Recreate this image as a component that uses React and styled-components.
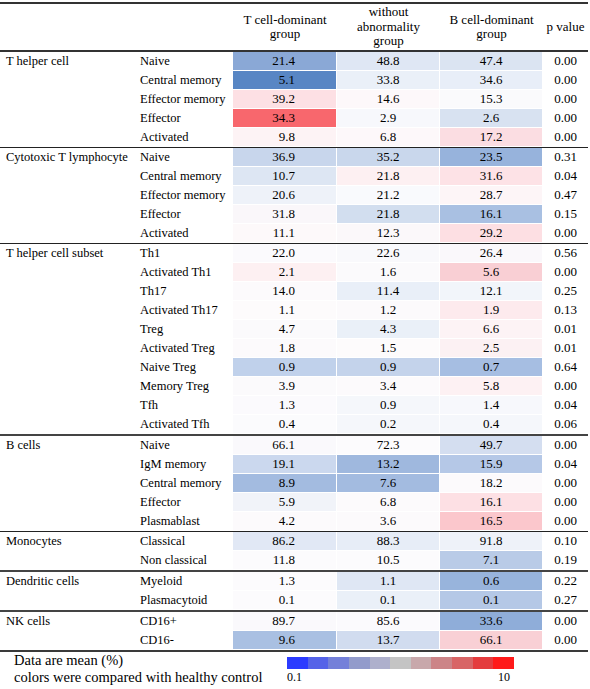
import React from 'react';
import styled, { createGlobalStyle } from 'styled-components';

const GlobalStyle = createGlobalStyle`
  body {
    margin: 0;
    background: #fff;
    color: #000;
  }
`;

const COLS = '138px 95px 104px 103px 103px 45px';

const Page = styled.div`
  width: 590px;
  padding-top: 2px;
  font-family: 'Liberation Serif', 'Times New Roman', serif;
  font-size: 12.5px;
`;

const Table = styled.div`
  width: 588px;
  border-top: 2px solid #333;
  border-bottom: 2px solid #3a3a3a;
`;

const HeaderRow = styled.div`
  display: grid;
  grid-template-columns: ${COLS};
  height: 46px;
  border-bottom: 2px solid #333;
  font-size: 13px;
`;

const HeadCell = styled.div`
  display: flex;
  align-items: center;
  justify-content: center;
  text-align: center;
  line-height: 14.5px;
`;

const Section = styled.div`
  display: grid;
  grid-template-columns: ${COLS};
  grid-auto-rows: 19px;
  border-top: ${(p) => (p.$first ? 'none' : p.$thin ? '1px solid #222' : '2px solid #444')};
`;

const GroupLabel = styled.div`
  grid-column: 1;
  grid-row: 1 / span ${(p) => p.$span};
  padding-left: 6px;
  line-height: 19px;
`;

const SubLabel = styled.div`
  grid-column: 2;
  padding-left: 2px;
  line-height: 19px;
  white-space: nowrap;
`;

const Value = styled.div`
  background: ${(p) => p.$bg || '#fff'};
  box-shadow: inset -1px -1px 0 #fff;
  line-height: 18px;
  font-size: 13px;
  text-align: ${(p) => (p.$right ? 'right' : 'center')};
  padding-right: ${(p) => (p.$right ? '42px' : '1px')};
`;

const PCell = styled.div`
  text-align: center;
  line-height: 18px;
  font-size: 13px;
`;

const Legend = styled.div`
  display: flex;
  padding-left: 14px;
`;

const Note = styled.div`
  width: 273px;
  font-size: 14.5px;
  line-height: 17px;
`;

const Scale = styled.div`
  display: flex;
  flex-direction: column;
  width: 227px;
  padding-top: 5px;
`;

const Bar = styled.div`
  display: flex;
  height: 12px;
`;

const Swatch = styled.div`
  flex: 1;
  background: ${(p) => p.$c};
`;

const ScaleLabels = styled.div`
  display: flex;
  justify-content: space-between;
  margin-top: 1px;
  font-size: 12px;
  line-height: 14px;
  padding-right: 4px;
`;

const sections = [
  {
    name: 'T helper cell',
    rows: [
      ['Naive', ['21.4', '#8aa8d6'], ['48.8', '#dfe7f4'], ['47.4', '#dbe4f2'], '0.00'],
      ['Central memory', ['5.1', '#5886c4'], ['33.8', '#eaf0f8'], ['34.6', '#e8eef8'], '0.00'],
      ['Effector memory', ['39.2', '#fde0e4'], ['14.6', '#fdf8fa'], ['15.3', '#fafafc'], '0.00'],
      ['Effector', ['34.3', '#f8676d'], ['2.9', '#f7f8fc'], ['2.6', '#d8e2f1'], '0.00'],
      ['Activated', ['9.8', '#fdf3f5'], ['6.8', '#fdf8fa'], ['17.2', '#fbdde2'], '0.00'],
    ],
  },
  {
    name: 'Cytotoxic T lymphocyte',
    thin: true,
    rows: [
      ['Naive', ['36.9', '#c8d6ec'], ['35.2', '#c9d7ec'], ['23.5', '#97b3dc'], '0.31'],
      ['Central memory', ['10.7', '#dde6f3'], ['21.8', '#fdf0f2'], ['31.6', '#fde2e6'], '0.04'],
      ['Effector memory', ['20.6', '#eef2f9'], ['21.2', '#f9fafd'], ['28.7', '#fdf5f7'], '0.47'],
      ['Effector', ['31.8', '#faf7fa'], ['21.8', '#d2deef'], ['16.1', '#a9c0e2'], '0.15'],
      ['Activated', ['11.1', '#fdf9fa'], ['12.3', '#fbf8fa'], ['29.2', '#fddfe3'], '0.00'],
    ],
  },
  {
    name: 'T helper cell subset',
    thin: true,
    rows: [
      ['Th1', ['22.0', '#fbfafd'], ['22.6', '#f9f9fc'], ['26.4', '#faf8fb'], '0.56'],
      ['Activated Th1', ['2.1', '#fdf0f2'], ['1.6', '#fbfafc'], ['5.6', '#f9cfd4'], '0.00'],
      ['Th17', ['14.0', '#fcfafc'], ['11.4', '#e9eff8'], ['12.1', '#f2f5fa'], '0.25'],
      ['Activated Th17', ['1.1', '#fdfbfc'], ['1.2', '#fcfafc'], ['1.9', '#fdeaed'], '0.13'],
      ['Treg', ['4.7', '#fbfafc'], ['4.3', '#eaf0f8'], ['6.6', '#fdf3f5'], '0.01'],
      ['Activated Treg', ['1.8', '#fcfafc'], ['1.5', '#fdfbfc'], ['2.5', '#fcf1f3'], '0.01'],
      ['Naive Treg', ['0.9', '#c0d1eb'], ['0.9', '#c4d3eb'], ['0.7', '#a6bee2'], '0.64'],
      ['Memory Treg', ['3.9', '#fbfafc'], ['3.4', '#fcfafc'], ['5.8', '#fdf1f3'], '0.00'],
      ['Tfh', ['1.3', '#fbfafd'], ['0.9', '#f5f7fb'], ['1.4', '#f7f8fc'], '0.04'],
      ['Activated Tfh', ['0.4', '#fbfbfd'], ['0.2', '#f5f7fb'], ['0.4', '#f5f7fb'], '0.06'],
    ],
  },
  {
    name: 'B cells',
    rows: [
      ['Naive', ['66.1', '#faf9fc'], ['72.3', '#fcfbfd'], ['49.7', '#d4def0'], '0.00'],
      ['IgM memory', ['19.1', '#cbd8ee'], ['13.2', '#9fb8de'], ['15.9', '#b5c8e7'], '0.04'],
      ['Central memory', ['8.9', '#a3bbe0'], ['7.6', '#a3bbe0'], ['18.2', '#fcfafc'], '0.00'],
      ['Effector', ['5.9', '#f1f3f9'], ['6.8', '#fcfafc'], ['16.1', '#fde0e4'], '0.00'],
      ['Plasmablast', ['4.2', '#fcfafc'], ['3.6', '#fcfafc'], ['16.5', '#fbc7cc'], '0.00'],
    ],
  },
  {
    name: 'Monocytes',
    thin: true,
    rows: [
      ['Classical', ['86.2', '#e1e8f5'], ['88.3', '#e7edf7'], ['91.8', '#eef2f9'], '0.10'],
      ['Non classical', ['11.8', '#fcfbfd'], ['10.5', '#fcfbfd'], ['7.1', '#b9cbe7'], '0.19'],
    ],
  },
  {
    name: 'Dendritic cells',
    rows: [
      ['Myeloid', ['1.3', '#fcfbfd'], ['1.1', '#dfe7f4'], ['0.6', '#98b4dc'], '0.22'],
      ['Plasmacytoid', ['0.1', '#fcfbfd'], ['0.1', '#eaf0f8'], ['0.1', '#b5c8e6'], '0.27'],
    ],
  },
  {
    name: 'NK cells',
    rows: [
      ['CD16+', ['89.7', '#faf9fc'], ['85.6', '#fbfafd'], ['33.6', '#8fadd9'], '0.00'],
      ['CD16-', ['9.6', '#a9c0e2'], ['13.7', '#d1dcef'], ['66.1', '#f9d0d5'], '0.00'],
    ],
  },
];

const scale = [
  '#2b3bff', '#5563e8', '#7480d9', '#929bcb', '#aeb0cc', '#c4c4c4',
  '#c8a8ab', '#cc8487', '#d86566', '#e43c3e', '#ff1a1a',
];

export default function App() {
  return (
    <Page>
      <GlobalStyle />
      <Table>
        <HeaderRow>
          <HeadCell />
          <HeadCell />
          <HeadCell>T cell-dominant<br />group</HeadCell>
          <HeadCell>without<br />abnormality<br />group</HeadCell>
          <HeadCell>B cell-dominant<br />group</HeadCell>
          <HeadCell>p value</HeadCell>
        </HeaderRow>
        {sections.map((s, i) => (
          <Section key={s.name} $first={i === 0} $thin={s.thin}>
            <GroupLabel $span={s.rows.length}>{s.name}</GroupLabel>
            {s.rows.map(([label, t, w, b, p]) => (
              <React.Fragment key={label}>
                <SubLabel>{label}</SubLabel>
                <Value $bg={t[1]} $right>{t[0]}</Value>
                <Value $bg={w[1]}>{w[0]}</Value>
                <Value $bg={b[1]}>{b[0]}</Value>
                <PCell>{p}</PCell>
              </React.Fragment>
            ))}
          </Section>
        ))}
      </Table>
      <Legend>
        <Note>
          Data are mean (%)<br />
          colors were compared with healthy control
        </Note>
        <Scale>
          <Bar>
            {scale.map((c) => (
              <Swatch key={c} $c={c} />
            ))}
          </Bar>
          <ScaleLabels>
            <span>0.1</span>
            <span>10</span>
          </ScaleLabels>
        </Scale>
      </Legend>
    </Page>
  );
}
